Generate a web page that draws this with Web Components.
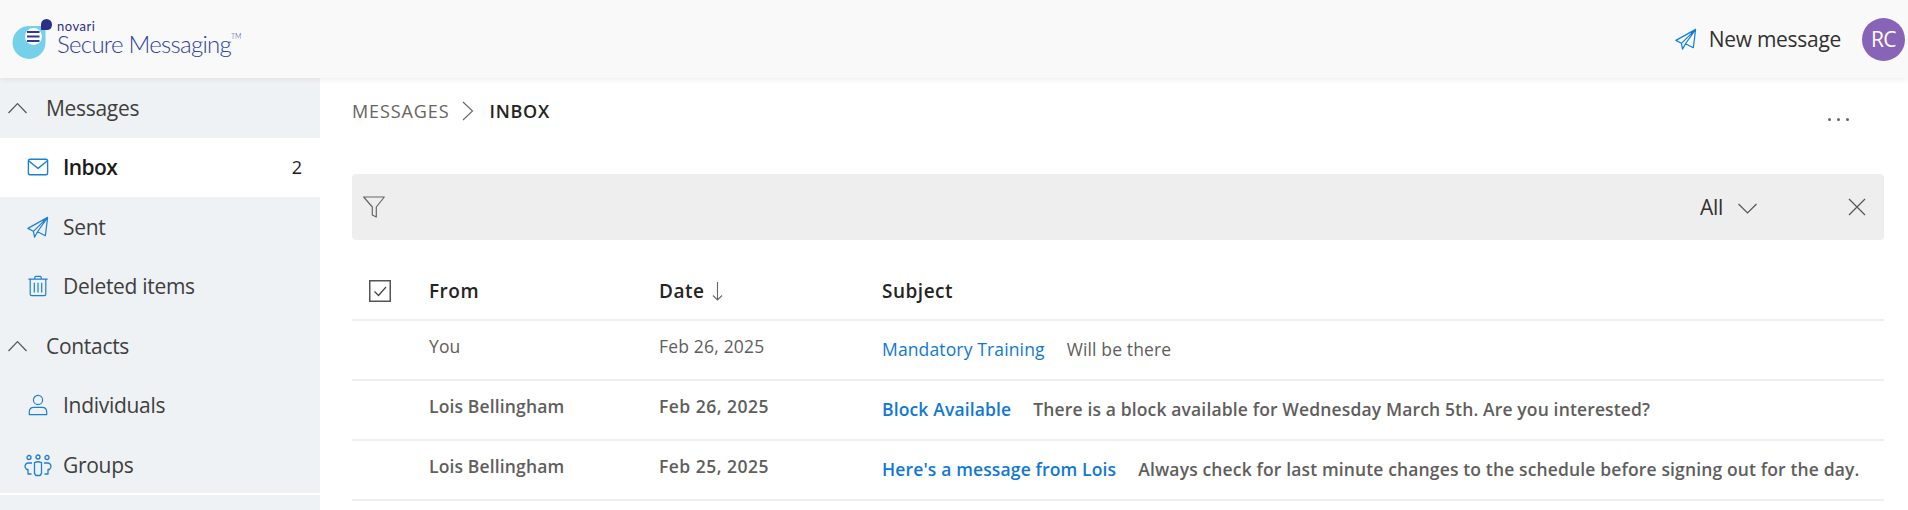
<!DOCTYPE html>
<html>
<head>
<meta charset="utf-8">
<title>Secure Messaging</title>
<style>
  html, body { margin: 0; height: 100%; overflow: hidden; background: #fff; }
  body { font-family: "Open Sans", "Noto Sans", sans-serif; color: #323130; }
</style>
</head>
<body>
<app-shell>
  <top-bar slot="top"></top-bar>
  <side-nav slot="side">
    <nav-group label="Messages"></nav-group>
    <nav-item icon="mail" label="Inbox" count="2" active></nav-item>
    <nav-item icon="send" label="Sent"></nav-item>
    <nav-item icon="trash" label="Deleted items"></nav-item>
    <nav-group label="Contacts"></nav-group>
    <nav-item icon="person" label="Individuals"></nav-item>
    <nav-item icon="people" label="Groups"></nav-item>
  </side-nav>
  <inbox-view slot="main">
    <bread-crumb></bread-crumb>
    <filter-bar></filter-bar>
    <message-head></message-head>
    <message-row from="You" date="Feb 26, 2025" subject="Mandatory Training" preview="Will be there"></message-row>
    <message-row unread from="Lois Bellingham" date="Feb 26, 2025" subject="Block Available" preview="There is a block available for Wednesday March 5th. Are you interested?"></message-row>
    <message-row unread from="Lois Bellingham" date="Feb 25, 2025" subject="Here's a message from Lois" preview="Always check for last minute changes to the schedule before signing out for the day."></message-row>
  </inbox-view>
</app-shell>

<script>
const ICONS = {
  mail: '<rect x="1.5" y="3.5" width="21" height="17" rx="2"/><path d="M2 5.5l10 8 10-8"/>',
  send: '<path d="M22.5 1.5L1 13.5l6 3.2zM22.5 1.5L20 21.5l-8.5-4.3zM22.5 1.5L7 16.7l1.2 6.3 3.3-5.8"/>',
  trash: '<path d="M1.5 4.5h21M8.5 4V2.5q0-1 1-1h5q1 0 1 1V4M3.5 4.5V21q0 1.5 1.5 1.5h14q1.5 0 1.5-1.5V4.5M8 8.5V19M12 8.5V19M16 8.5V19"/>',
  person: '<circle cx="12" cy="6.5" r="5"/><path d="M2.5 22.5v-3q0-5 5-5h9q5 0 5 5v3z"/>',
  people: '<circle cx="5" cy="4.5" r="2"/><circle cx="14" cy="4" r="2"/><circle cx="23" cy="4.5" r="2"/><path d="M10.5 9.5q3.5-1.5 7 0v11l-1.5 2h-4l-1.5-2zM8 10H4q-3 .5-3 4l1.5 2.5H4V21h3.5M20 10h4q3 .5 3 4l-1.5 2.5H24V21h-3.5"/>'
};

class AppShell extends HTMLElement {
  constructor() {
    super();
    this.attachShadow({ mode: 'open' });
    this.shadowRoot.innerHTML = `
      <style>
        :host { display: grid; grid-template-columns: 320px 1fr; grid-template-rows: 78px 432px; height: 510px; overflow: hidden; }
        .top { grid-column: 1 / 3; position: relative; z-index: 2; box-shadow: 0 1px 6px rgba(0,0,0,.08); }
        .side { background: #eff2f5; }
        .main { min-width: 0; }
      </style>
      <div class="top"><slot name="top"></slot></div>
      <div class="side"><slot name="side"></slot></div>
      <div class="main"><slot name="main"></slot></div>
    `;
  }
}
customElements.define('app-shell', AppShell);

class TopBar extends HTMLElement {
  constructor() {
    super();
    this.attachShadow({ mode: 'open' });
    this.shadowRoot.innerHTML = `
      <style>
        :host { display: flex; align-items: center; justify-content: space-between; height: 78px; background: #f9f9f9; }
        .brand { display: flex; align-items: center; margin-left: 12px; }
        .brand svg { display: block; flex: none; }
        .words { margin-left: 3px; color: #2f3f9c; padding-bottom: 3px; }
        .novari { font: 400 13px/12px "Lato", sans-serif; letter-spacing: .5px; color: #2c2f86; }
        .name { font: 300 24px/24px "Lato", sans-serif; letter-spacing: -.72px; white-space: nowrap; }
        .name sup { font-size: 7px; letter-spacing: 0; vertical-align: 14px; line-height: 0; }
        .right { display: flex; align-items: center; margin-right: 3px; }
        .new { display: flex; align-items: center; gap: 12px; font-size: 21px; letter-spacing: -.3px; color: #323130; }
        .avatar { width: 43px; height: 43px; border-radius: 50%; background: #8764b8; color: #fff; font-size: 21px; letter-spacing: -.5px; display: flex; align-items: center; justify-content: center; margin-left: 21px; }
      </style>
      <div class="brand">
        <svg width="42" height="44" viewBox="12 16 42 44">
          <path d="M29 25H45.5V41A16.5 16.5 0 1 1 29 25z" fill="#75d1ea"/>
          <circle cx="33.5" cy="35.5" r="8.5" fill="#fff"/>
          <path d="M46.5 18a5.5 5.5 0 0 1 5.5 5.5q0 5.5-5.5 5.5H41V23.5A5.5 5.5 0 0 1 46.5 18z" fill="#2c2f86"/>
          <path d="M27 31h12.500M27 35.500h12.500M27 40h12.500" stroke="#33369a" stroke-width="2" fill="none"/>
        </svg>
        <div class="words">
          <div class="novari">novari</div>
          <div class="name">Secure Messaging<sup>TM</sup></div>
        </div>
      </div>
      <div class="right">
        <div class="new">
          <svg width="22" height="22" viewBox="0 0 24 24" fill="none" stroke="#0f7fd6" stroke-width="1.3" stroke-linejoin="round">${ICONS.send}</svg>
          <span>New message</span>
        </div>
        <div class="avatar">RC</div>
      </div>
    `;
  }
}
customElements.define('top-bar', TopBar);

class SideNav extends HTMLElement {
  constructor() {
    super();
    this.attachShadow({ mode: 'open' });
    this.shadowRoot.innerHTML = `
      <style>
        :host { display: block; height: 415px; border-bottom: 2px solid #fff; }
      </style>
      <slot></slot>
    `;
  }
}
customElements.define('side-nav', SideNav);

class NavGroup extends HTMLElement {
  constructor() {
    super();
    this.attachShadow({ mode: 'open' });
    this.shadowRoot.innerHTML = `
      <style>
        :host { display: flex; align-items: center; height: 59.5px; padding-left: 8px; font-size: 21px; letter-spacing: -.3px; color: #3f3e3d; }
        svg { flex: none; margin-right: 19px; }
      </style>
      <svg width="19" height="12" viewBox="0 0 19 12" fill="none" stroke="#555" stroke-width="1.2"><path d="M.5 11L9.5 1.5 18.5 11"/></svg>
      <span>${this.getAttribute('label')}</span>
    `;
  }
}
customElements.define('nav-group', NavGroup);

class NavItem extends HTMLElement {
  constructor() {
    super();
    const active = this.hasAttribute('active');
    const icon = this.getAttribute('icon');
    const wide = icon === 'people';
    const count = this.getAttribute('count');
    this.attachShadow({ mode: 'open' });
    this.shadowRoot.innerHTML = `
      <style>
        :host { display: flex; align-items: center; height: 59.5px; padding: 0 18px 0 27px; box-sizing: border-box; font-size: 21px; letter-spacing: -.3px; color: #3f3e3d; }
        :host([active]) { background: #fff; color: #1b1a19; font-weight: 600; letter-spacing: -.6px; }
        .ic { width: 36px; flex: none; display: flex; }
        .ic svg { display: block; }
        .label { flex: 1; }
        .count { font-size: 18px; font-weight: 400; letter-spacing: 0; }
      </style>
      <div class="ic">
        <svg style="${wide ? 'margin-left:-3px' : ''}" width="${wide ? 28 : 22}" height="${wide ? 24 : 22}" viewBox="0 0 ${wide ? 28 : 24} 24" fill="none" stroke="#1f7fd0" stroke-width="${active ? 1.5 : 1.3}" stroke-linejoin="round">${ICONS[icon]}</svg>
      </div>
      <span class="label">${this.getAttribute('label')}</span>
      ${count ? `<span class="count">${count}</span>` : ''}
    `;
  }
}
customElements.define('nav-item', NavItem);

class InboxView extends HTMLElement {
  constructor() {
    super();
    this.attachShadow({ mode: 'open' });
    this.shadowRoot.innerHTML = `
      <style>
        :host { display: block; padding: 0 24px 0 32px; }
      </style>
      <slot></slot>
    `;
  }
}
customElements.define('inbox-view', InboxView);

class BreadCrumb extends HTMLElement {
  constructor() {
    super();
    this.attachShadow({ mode: 'open' });
    this.shadowRoot.innerHTML = `
      <style>
        :host { display: flex; align-items: center; height: 96px; box-sizing: border-box; padding-bottom: 31px; font-size: 18px; letter-spacing: .9px; color: #66645f; }
        svg { margin: 1px 15px 0 13px; flex: none; }
        b { font-weight: 600; color: #252423; letter-spacing: .7px; }
        .more { margin-left: auto; margin-right: 35px; margin-top: 17px; display: flex; gap: 6px; }
        .more i { width: 3px; height: 3px; border-radius: 50%; background: #666; }
      </style>
      <span>MESSAGES</span>
      <svg width="12" height="20" viewBox="0 0 12 20" fill="none" stroke="#666" stroke-width="1.1"><path d="M1 1l9.5 9L1 19"/></svg>
      <b>INBOX</b>
      <div class="more"><i></i><i></i><i></i></div>
    `;
  }
}
customElements.define('bread-crumb', BreadCrumb);

class FilterBar extends HTMLElement {
  constructor() {
    super();
    this.attachShadow({ mode: 'open' });
    this.shadowRoot.innerHTML = `
      <style>
        :host { display: flex; align-items: center; height: 66px; background: #eee; border-radius: 4px; padding: 0 18px 0 11px; font-size: 21px; letter-spacing: -.3px; color: #323130; }
        .all { margin-left: auto; margin-right: 15px; }
        .chev { margin-right: 91px; margin-top: 3px; }
      </style>
      <svg width="22" height="22" viewBox="0 0 22 22" fill="none" stroke="#666" stroke-width="1.2" stroke-linejoin="round"><path d="M.7 1h20.6l-8 10v10l-4-2v-8z"/></svg>
      <span class="all">All</span>
      <svg class="chev" width="19" height="11" viewBox="0 0 19 11" fill="none" stroke="#555" stroke-width="1.2"><path d="M.5 1l9 9 9-9"/></svg>
      <svg width="18" height="18" viewBox="0 0 18 18" fill="none" stroke="#555" stroke-width="1.2"><path d="M1 1l16 16M17 1L1 17"/></svg>
    `;
  }
}
customElements.define('filter-bar', FilterBar);

const ROW_GRID = `display: grid; grid-template-columns: 77px 230px 223px 1fr; align-items: center; height: 60px; box-sizing: border-box; border-bottom: 2px solid #eee;`;

class MessageHead extends HTMLElement {
  constructor() {
    super();
    this.attachShadow({ mode: 'open' });
    this.shadowRoot.innerHTML = `
      <style>
        :host { ${ROW_GRID} height: 81px; padding-top: 23px; font-size: 19px; font-weight: 600; letter-spacing: .5px; color: #252423; }
        .check { display: flex; padding-left: 17px; }
        .date { display: flex; align-items: center; gap: 8px; }
      </style>
      <div class="check">
        <svg width="22" height="22" viewBox="0 0 22 22" fill="none"><rect x=".75" y=".75" width="20.5" height="20.5" stroke="#555" stroke-width="1.5"/><path d="M5.5 11.5l4 4 7.5-8.5" stroke="#444" stroke-width="1.2"/></svg>
      </div>
      <span>From</span>
      <span class="date">Date
        <svg width="11" height="19" viewBox="0 0 11 19" fill="none" stroke="#666" stroke-width="1.1"><path d="M5.5 0v18M1 13.5L5.5 18 10 13.5"/></svg>
      </span>
      <span>Subject</span>
    `;
  }
}
customElements.define('message-head', MessageHead);

class MessageRow extends HTMLElement {
  constructor() {
    super();
    this.attachShadow({ mode: 'open' });
    this.shadowRoot.innerHTML = `
      <style>
        :host { ${ROW_GRID} font-size: 17.5px; letter-spacing: .14px; color: #605e5c; }
        :host([unread]) { font-weight: 600; }
        .cell { padding-bottom: 8px; }
        .date { letter-spacing: .18px; }
        :host([unread]) .date { letter-spacing: .48px; }
        .subject { display: flex; gap: 22px; white-space: nowrap; padding-bottom: 2px; }
        a { color: #0f78d4; text-decoration: none; }
      </style>
      <span></span>
      <span class="cell">${this.getAttribute('from')}</span>
      <span class="cell date">${this.getAttribute('date')}</span>
      <div class="subject"><a href="#">${this.getAttribute('subject')}</a><span>${this.getAttribute('preview')}</span></div>
    `;
  }
}
customElements.define('message-row', MessageRow);
</script>
</body>
</html>
